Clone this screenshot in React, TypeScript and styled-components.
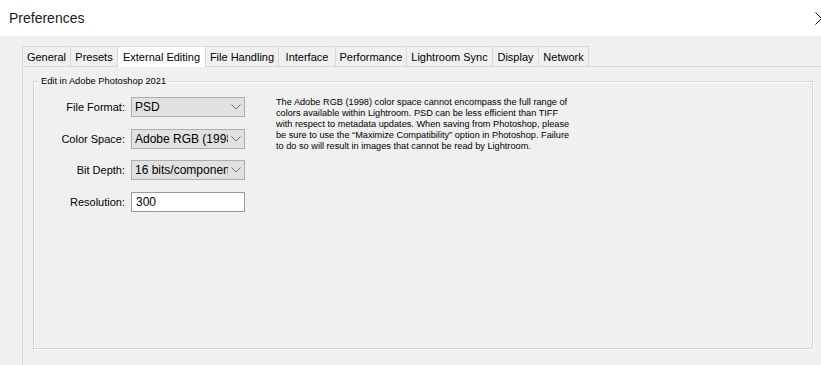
import React from "react";
import styled, { createGlobalStyle } from "styled-components";

interface TabItem {
  name: string;
  width: number;
}

const tabs: TabItem[] = [
  { name: "General", width: 49 },
  { name: "Presets", width: 48 },
  { name: "External Editing", width: 89 },
  { name: "File Handling", width: 74 },
  { name: "Interface", width: 58 },
  { name: "Performance", width: 72 },
  { name: "Lightroom Sync", width: 87 },
  { name: "Display", width: 47 },
  { name: "Network", width: 51 },
];

const selectedTab = "External Editing";

const description: string[] = [
  "The Adobe RGB (1998) color space cannot encompass the full range of",
  "colors available within Lightroom. PSD can be less efficient than TIFF",
  "with respect to metadata updates. When saving from Photoshop, please",
  "be sure to use the \u201cMaximize Compatibility\u201d option in Photoshop. Failure",
  "to do so will result in images that cannot be read by Lightroom.",
];

const Chevron = () => (
  <svg width="10" height="6" viewBox="0 0 10 6">
    <polyline points="0.5,0.5 5,5 9.5,0.5" fill="none" stroke="#707070" strokeWidth="1" />
  </svg>
);

const App = () => {
  return (
    <>
      <GlobalStyle />
      <Window>
        <TitleBar>
          <Title>Preferences</Title>
          <CloseButton>
            <svg width="13" height="13" viewBox="0 0 13 13">
              <path d="M0.5 0.5 L12.5 12.5 M12.5 0.5 L0.5 12.5" stroke="#111" strokeWidth="1" />
            </svg>
          </CloseButton>
        </TitleBar>
        <Body>
          <TabRow>
            {tabs.map((t) => (
              <Tab key={t.name} width={t.width} selected={t.name === selectedTab}>
                {t.name}
              </Tab>
            ))}
          </TabRow>
          <Panel>
            <GroupBox>
              <Legend>Edit in Adobe Photoshop 2021</Legend>
              <GroupContent>
                <Form>
                  <Label>File Format:</Label>
                  <Select>
                    <SelectText>PSD</SelectText>
                    <Chevron />
                  </Select>
                  <Label>Color Space:</Label>
                  <Select>
                    <SelectText>Adobe RGB (1998)</SelectText>
                    <Chevron />
                  </Select>
                  <Label>Bit Depth:</Label>
                  <Select>
                    <SelectText>16 bits/component</SelectText>
                    <Chevron />
                  </Select>
                  <Label>Resolution:</Label>
                  <TextBox>300</TextBox>
                </Form>
                <Description>
                  {description.map((line) => (
                    <DescLine key={line}>{line}</DescLine>
                  ))}
                </Description>
              </GroupContent>
            </GroupBox>
          </Panel>
        </Body>
      </Window>
    </>
  );
};

const GlobalStyle = createGlobalStyle`
  html, body {
    margin: 0;
    padding: 0;
    background: #f0f0f0;
    font-family: "Liberation Sans", Arial, sans-serif;
  }
`;

const Window = styled.div`
  width: 821px;
  height: 365px;
  overflow: hidden;
  display: flex;
  flex-direction: column;
  background: #f0f0f0;
`;

const TitleBar = styled.div`
  height: 36px;
  flex: none;
  background: #fff;
  display: flex;
  align-items: center;
  justify-content: space-between;
  padding-left: 9px;
`;

const Title = styled.div`
  font-size: 14px;
  color: #1a1a1a;
`;

const CloseButton = styled.div`
  width: 13px;
  height: 13px;
  margin-right: -7px;
  margin-top: 1px;
  display: flex;
`;

const Body = styled.div`
  flex: 1;
  display: flex;
  flex-direction: column;
  padding: 10px 0 0 22px;
`;

const TabRow = styled.div`
  height: 21px;
  display: flex;
  align-items: flex-end;
  margin-bottom: -1px;
  position: relative;
  z-index: 1;
`;

const Tab = styled.div<{ width: number; selected: boolean }>`
  width: ${(p) => p.width}px;
  box-sizing: border-box;
  height: ${(p) => (p.selected ? 21 : 20)}px;
  margin-bottom: ${(p) => (p.selected ? 0 : 1)}px;
  margin-left: -1px;
  &:first-child {
    margin-left: 0;
  }
  border: 1px solid #d9d9d9;
  border-bottom: none;
  background: ${(p) => (p.selected ? "#fff" : "#f0f0f0")};
  position: relative;
  z-index: ${(p) => (p.selected ? 2 : 1)};
  display: flex;
  align-items: center;
  justify-content: center;
  font-size: 11px;
  color: #000;
  white-space: nowrap;
  padding-top: ${(p) => (p.selected ? 0 : 1)}px;
`;

const Panel = styled.div`
  flex: 1;
  border-top: 1px solid #d9d9d9;
  border-left: 1px solid #d9d9d9;
  padding: 14px 0 0 10px;
`;

const GroupBox = styled.div`
  width: 780px;
  height: 268px;
  box-sizing: border-box;
  border: 1px solid #d5d5d5;
  box-shadow: inset 1px 1px 0 #fff, 1px 1px 0 #fff;
`;

const Legend = styled.div`
  width: fit-content;
  height: 11px;
  margin: -6px 0 0 4px;
  padding: 0 3px;
  line-height: 11px;
  font-size: 9.3px;
  background: #f0f0f0;
  color: #000;
`;

const GroupContent = styled.div`
  display: flex;
  align-items: flex-start;
  padding-top: 10px;
`;

const Form = styled.div`
  display: grid;
  grid-template-columns: 91px 114px;
  grid-auto-rows: 20px;
  column-gap: 6px;
  row-gap: 11.7px;
`;

const Label = styled.div`
  font-size: 11px;
  color: #000;
  text-align: right;
  align-self: center;
`;

const Select = styled.div`
  box-sizing: border-box;
  border: 1px solid #adadad;
  background: #e1e1e1;
  display: flex;
  align-items: center;
  padding: 0 3px 0 3px;
`;

const SelectText = styled.div`
  flex: 1;
  overflow: hidden;
  white-space: nowrap;
  font-size: 12px;
  color: #000;
  margin-right: 3px;
`;

const TextBox = styled.div`
  box-sizing: border-box;
  border: 1px solid #9a9a9a;
  background: #fff;
  display: flex;
  align-items: center;
  padding-left: 4px;
  font-size: 12px;
  color: #000;
`;

const Description = styled.div`
  margin-left: 31px;
  font-size: 9.2px;
  line-height: 11px;
  color: #000;
`;

const DescLine = styled.div`
  white-space: nowrap;
`;

export default App;
